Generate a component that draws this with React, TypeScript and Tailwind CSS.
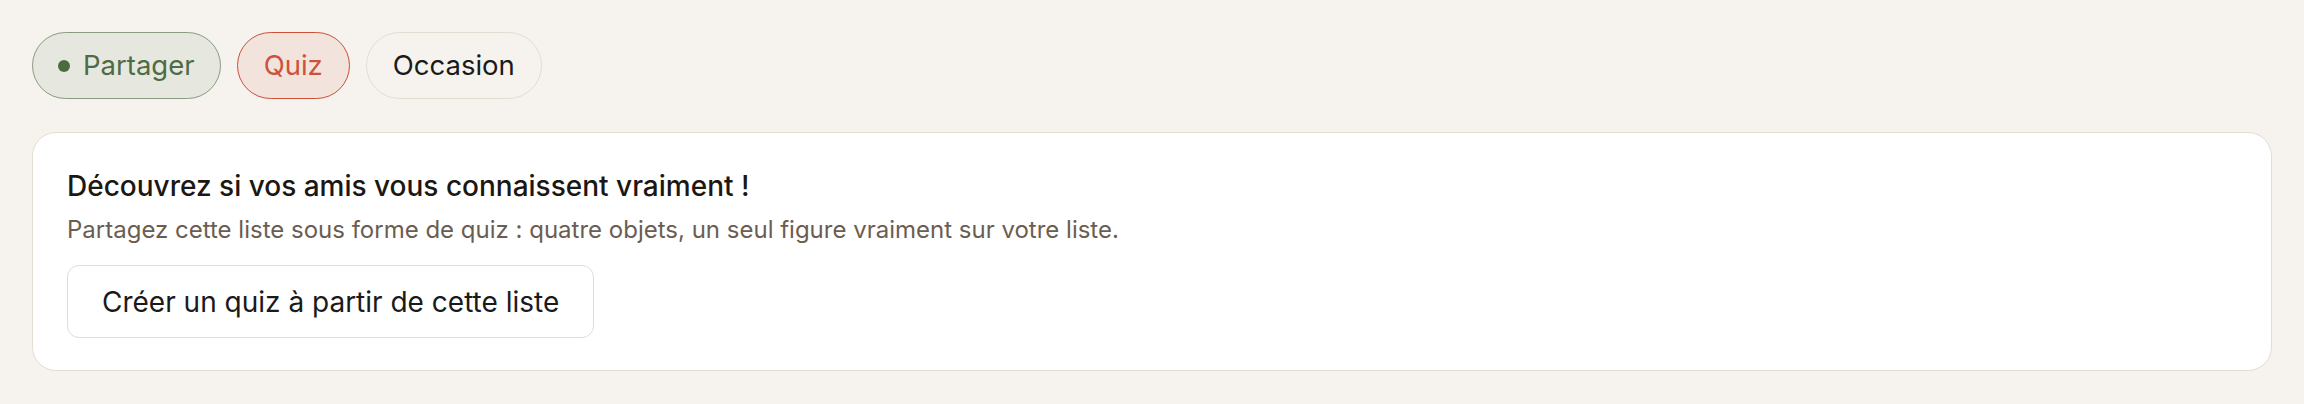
import React from "react";

export default function App() {
  return (
    <div className="min-h-screen w-full bg-[#f6f3ee] p-8 font-['Inter',sans-serif]">
      <div className="flex items-center gap-4">
        <button className="inline-flex h-[67px] items-center gap-[13px] rounded-full border-[1.5px] border-[#8a9c80] bg-[#e6e7df] px-[25px] text-[27.5px] text-[#4e6b45]">
          <span className="h-[12px] w-[12px] rounded-full bg-[#4c6a42]" />
          Partager
        </button>
        <button className="inline-flex h-[67px] items-center rounded-full border-[1.5px] border-[#cf4f36] bg-[#f3e3dd] px-[26px] text-[27.5px] text-[#cc533b]">
          Quiz
        </button>
        <button className="inline-flex h-[67px] items-center rounded-full border-[1.5px] border-[#e4ddd2] bg-transparent px-[26px] text-[27.5px] text-[#1a1a1a]">
          Occasion
        </button>
      </div>

      <div className="mt-[33px] rounded-[24px] border-[1.5px] border-[#e4ddd2] bg-white px-[34px] pb-[32px] pt-[32px]">
        <h2 className="text-[28px] font-medium leading-[42px] text-[#1c1712]">
          Découvrez si vos amis vous connaissent vraiment !
        </h2>
        <p className="mt-[5px] text-[24px] leading-[36px] text-[#6b5d52]">
          Partagez cette liste sous forme de quiz : quatre objets, un seul figure vraiment sur votre liste.
        </p>
        <button className="mt-[17px] inline-flex h-[73px] items-center rounded-[12px] border-[1.5px] border-[#e4ddd2] bg-white px-[34px] text-[28px] text-[#1a1a1a]">
          Créer un quiz à partir de cette liste
        </button>
      </div>
    </div>
  );
}
